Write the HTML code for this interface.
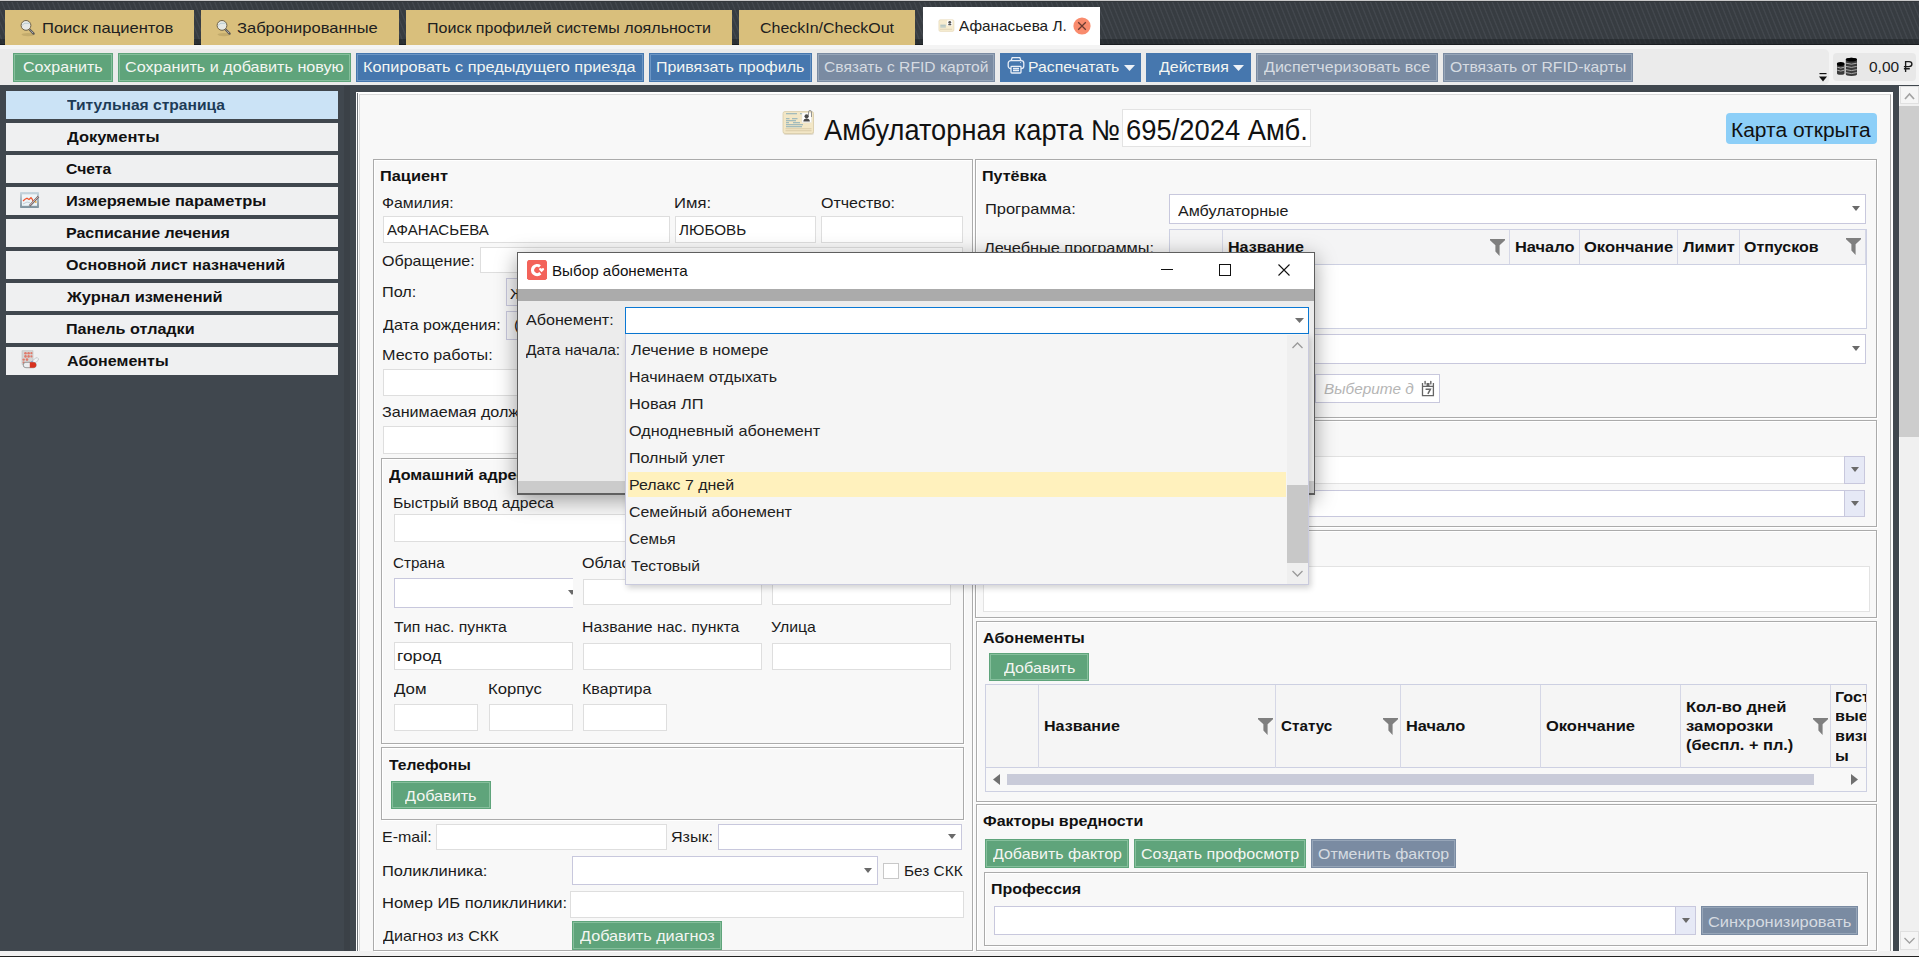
<!DOCTYPE html>
<html><head><meta charset="utf-8"><title>Амбулаторная карта</title>
<style>
html,body{margin:0;padding:0;}
body{width:1919px;height:957px;overflow:hidden;position:relative;background:#40474e;font-family:"Liberation Sans",sans-serif;}
.r{position:absolute;}
.t{position:absolute;white-space:nowrap;transform-origin:0 0;}
</style></head><body>
<div class="r" style="left:0px;top:0px;width:1919px;height:1px;background:#c9c9c9"></div>
<div class="r" style="left:0px;top:1px;width:1919px;height:44px;background:repeating-linear-gradient(68deg,#373c41 0px,#373c41 2.6px,#42474d 3.4px,#42474d 4px,#373c41 4.7px)"></div>
<div class="r" style="left:0px;top:1px;width:1919px;height:1px;background:#33373b"></div>
<div class="r" style="left:0px;top:39px;width:1919px;height:6px;background:#1f2327;opacity:0.55"></div>
<div class="r" style="left:0px;top:44px;width:1919px;height:1px;background:#1b1e21"></div>
<div class="r" style="left:5px;top:10px;width:189px;height:35px;background:#d9bf7c"></div>
<div class="t" style="left:41.90px;top:19px;font-size:15.0px;line-height:17px;color:#202020;transform:scaleX(1.1043);">Поиск пациентов</div>
<svg class="r" style="left:20px;top:18px" width="18" height="19" viewBox="0 0 18 19"><ellipse cx="8" cy="16.6" rx="6.5" ry="1.6" fill="#9c8650" opacity="0.35"/><line x1="9.3" y1="11.3" x2="13.6" y2="15.6" stroke="#5d5a55" stroke-width="2.3" stroke-linecap="round"/><line x1="9.6" y1="11.6" x2="13.4" y2="15.4" stroke="#d9d9e6" stroke-width="1" stroke-dasharray="0.9 0.9"/><circle cx="6.0" cy="7.4" r="4.9" fill="#e6e9e6" stroke="#6f6348" stroke-width="1"/><path d="M2.4 7.6 Q3 5.6 5 5.3 L9.8 5.3" stroke="#b4c8d0" stroke-width="0.9" fill="none"/></svg>
<div class="r" style="left:201px;top:10px;width:198px;height:35px;background:#d9bf7c"></div>
<div class="t" style="left:237.40px;top:19px;font-size:15.0px;line-height:17px;color:#202020;transform:scaleX(1.1008);">Забронированные</div>
<svg class="r" style="left:215.5px;top:18px" width="18" height="19" viewBox="0 0 18 19"><ellipse cx="8" cy="16.6" rx="6.5" ry="1.6" fill="#9c8650" opacity="0.35"/><line x1="9.3" y1="11.3" x2="13.6" y2="15.6" stroke="#5d5a55" stroke-width="2.3" stroke-linecap="round"/><line x1="9.6" y1="11.6" x2="13.4" y2="15.4" stroke="#d9d9e6" stroke-width="1" stroke-dasharray="0.9 0.9"/><circle cx="6.0" cy="7.4" r="4.9" fill="#e6e9e6" stroke="#6f6348" stroke-width="1"/><path d="M2.4 7.6 Q3 5.6 5 5.3 L9.8 5.3" stroke="#b4c8d0" stroke-width="0.9" fill="none"/></svg>
<div class="r" style="left:406px;top:10px;width:326px;height:35px;background:#d9bf7c"></div>
<div class="t" style="left:426.93px;top:19px;font-size:15.0px;line-height:17px;color:#202020;transform:scaleX(1.0682);">Поиск профилей системы лояльности</div>
<div class="r" style="left:739px;top:10px;width:176px;height:35px;background:#d9bf7c"></div>
<div class="t" style="left:759.94px;top:19px;font-size:15.0px;line-height:17px;color:#202020;transform:scaleX(1.0640);">CheckIn/CheckOut</div>
<div class="r" style="left:923px;top:7px;width:177px;height:38px;background:#ffffff"></div>
<div class="t" style="left:959.00px;top:18px;font-size:14.6px;line-height:16px;color:#202020;transform:scaleX(1.0495);">Афанасьева Л.</div>
<svg class="r" style="left:938px;top:19px" width="17" height="13" viewBox="0 0 17 14"><rect x="0.3" y="0.8" width="16.2" height="12.6" rx="1.6" fill="#f6ecd0" stroke="#e3d6b4" stroke-width="0.6"/><rect x="1.8" y="6.2" width="6" height="0.9" fill="#8fb1bd"/><rect x="1.8" y="8.1" width="6" height="0.9" fill="#8fb1bd"/><rect x="1.5" y="10.5" width="13" height="1" fill="#ddd2b6"/><rect x="9.2" y="1.5" width="5.6" height="5.6" fill="#fff"/><circle cx="12" cy="3.6" r="1.5" fill="#555"/><rect x="10.3" y="5" width="3.4" height="1.6" rx="0.6" fill="#555"/></svg>
<svg class="r" style="left:1073px;top:17px" width="18" height="18" viewBox="0 0 18 18"><circle cx="9" cy="9" r="8.6" fill="#f98b6d"/><path d="M5.2 5.2 L12.8 12.8 M12.8 5.2 L5.2 12.8" stroke="#6b3a30" stroke-width="1.3"/></svg>
<div class="r" style="left:0px;top:45px;width:1919px;height:40px;background:#f4f4f4"></div>
<div class="r" style="left:0px;top:49px;width:1829px;height:36px;background:#ebebeb;border-radius:0 5px 5px 0"></div>
<div class="r" style="left:1833px;top:53px;width:83px;height:28px;background:#e8e8e8;border-radius:4px"></div>
<div class="r" style="left:13px;top:53px;width:100px;height:29px;background:#5fa47b;box-shadow:inset 0 0 0 1px #5fa47b, inset 0 0 0 2px #86bf9c;"></div>
<div class="t" style="left:22.93px;top:58px;font-size:15.0px;line-height:17px;color:#f4f6f2;transform:scaleX(1.0685);">Сохранить</div>
<div class="r" style="left:118px;top:53px;width:233px;height:29px;background:#5fa47b;box-shadow:inset 0 0 0 1px #5fa47b, inset 0 0 0 2px #86bf9c;"></div>
<div class="t" style="left:124.67px;top:58px;font-size:15.0px;line-height:17px;color:#f4f6f2;transform:scaleX(1.0767);">Сохранить и добавить новую</div>
<div class="r" style="left:356px;top:53px;width:288px;height:29px;background:#4677ae;box-shadow:inset 0 0 0 1px #4677ae, inset 0 0 0 2px #6d96c4;"></div>
<div class="t" style="left:362.92px;top:58px;font-size:15.0px;line-height:17px;color:#f4f6f2;transform:scaleX(1.0837);">Копировать с предыдущего приезда</div>
<div class="r" style="left:649px;top:53px;width:163px;height:29px;background:#4677ae;box-shadow:inset 0 0 0 1px #4677ae, inset 0 0 0 2px #6d96c4;"></div>
<div class="t" style="left:655.93px;top:58px;font-size:15.0px;line-height:17px;color:#f4f6f2;transform:scaleX(1.0652);">Привязать профиль</div>
<div class="r" style="left:817px;top:53px;width:178px;height:29px;background:#7a8ba2;box-shadow:inset 0 0 0 1px #7a8ba2, inset 0 0 0 2px #96a5b8;"></div>
<div class="t" style="left:823.76px;top:58px;font-size:15.0px;line-height:17px;color:#d6dbe1;transform:scaleX(1.0410);">Связать с RFID картой</div>
<div class="r" style="left:1000px;top:53px;width:141px;height:29px;background:#4677ae;"></div>
<div class="t" style="left:1027.95px;top:58px;font-size:15.0px;line-height:17px;color:#f4f6f2;transform:scaleX(1.0529);">Распечатать</div>
<div class="r" style="left:1146px;top:53px;width:105px;height:29px;background:#4677ae;"></div>
<div class="t" style="left:1159.00px;top:58px;font-size:15.0px;line-height:17px;color:#f4f6f2;transform:scaleX(1.0615);">Действия</div>
<div class="r" style="left:1256px;top:53px;width:182px;height:29px;background:#7a8ba2;box-shadow:inset 0 0 0 1px #7a8ba2, inset 0 0 0 2px #96a5b8;"></div>
<div class="t" style="left:1264.00px;top:58px;font-size:15.0px;line-height:17px;color:#d6dbe1;transform:scaleX(1.0710);">Диспетчеризовать все</div>
<div class="r" style="left:1443px;top:53px;width:190px;height:29px;background:#7a8ba2;box-shadow:inset 0 0 0 1px #7a8ba2, inset 0 0 0 2px #96a5b8;"></div>
<div class="t" style="left:1449.95px;top:58px;font-size:15.0px;line-height:17px;color:#d6dbe1;transform:scaleX(1.0482);">Отвязать от RFID-карты</div>
<svg class="r" style="left:1007px;top:56px" width="18" height="18" viewBox="0 0 18 18" fill="none" stroke="#e8eef6" stroke-width="1.3"><path d="M4.2 4.3 L5.2 1.6 H12.8 L13.8 4.3"/><rect x="1.2" y="4.6" width="15.6" height="8" rx="2.6"/><rect x="4" y="10.4" width="10" height="6.6" rx="0.8" fill="#4677ae"/><path d="M6 12.5 H12 M6 14.5 H12"/><circle cx="13.6" cy="6.6" r="0.5" fill="#e8eef6" stroke="none"/></svg>
<svg class="r" style="left:1124px;top:65px" width="11" height="6"><path d="M0 0 H11 L5.5 6 Z" fill="#eef2f7"/></svg>
<svg class="r" style="left:1233px;top:65px" width="11" height="6"><path d="M0 0 H11 L5.5 6 Z" fill="#eef2f7"/></svg>
<svg class="r" style="left:1819px;top:73px" width="8" height="9"><rect x="0.5" y="0" width="7" height="1.2" fill="#111"/><path d="M0 3.5 H8 L4 8.5 Z" fill="#111"/></svg>
<svg class="r" style="left:1836px;top:57px" width="22" height="20" viewBox="0 0 22 20"><g fill="#3a3a3a"><path d="M1 7 Q1 5.4 4.7 5.4 Q8.5 5.4 8.5 7 V16.3 Q8.5 17.8 4.7 17.8 Q1 17.8 1 16.3 Z"/><path d="M9.8 2.4 Q9.8 0.8 15.4 0.8 Q21 0.8 21 2.4 V17.2 Q21 18.9 15.4 18.9 Q9.8 18.9 9.8 17.2 Z"/></g><g fill="#000"><ellipse cx="4.7" cy="7" rx="3.8" ry="1.9"/><ellipse cx="15.4" cy="2.6" rx="5.6" ry="1.9"/></g><g stroke="#b5b5b5" stroke-width="0.9" fill="none"><path d="M1.2 10.2 Q4.7 12 8.3 10.2 M1.2 13.2 Q4.7 15 8.3 13.2 M10 6.2 Q15.4 8.2 20.8 6.2 M10 9.4 Q15.4 11.4 20.8 9.4 M10 12.6 Q15.4 14.6 20.8 12.6 M10 15.6 Q15.4 17.6 20.8 15.6"/></g></svg>
<div class="t" style="left:1868.87px;top:58px;font-size:15.0px;line-height:17px;color:#1b1b1b;transform:scaleX(1.0321);">0,00</div>
<svg class="r" style="left:1900px;top:58px" width="16" height="16" viewBox="1900 58 16 16"><path d="M1905.6 72 V61.6 H1909 Q1911.9 61.6 1911.9 64.1 Q1911.9 66.6 1909 66.6 H1903.9 M1903.9 68.7 H1909.8" stroke="#1b1b1b" stroke-width="1.35" fill="none"/></svg>
<div class="r" style="left:6px;top:91px;width:332px;height:28px;background:#cbe3f6"></div>
<div class="t" style="left:66.80px;top:96px;font-size:15.0px;line-height:17px;font-weight:700;color:#1d3b57;transform:scaleX(1.0395);">Титульная страница</div>
<div class="r" style="left:6px;top:123px;width:332px;height:28px;background:#eff0f1"></div>
<div class="t" style="left:66.80px;top:128px;font-size:15.0px;line-height:17px;font-weight:700;color:#111;transform:scaleX(1.0964);">Документы</div>
<div class="r" style="left:6px;top:155px;width:332px;height:28px;background:#eff0f1"></div>
<div class="t" style="left:65.75px;top:160px;font-size:15.0px;line-height:17px;font-weight:700;color:#111;transform:scaleX(1.0476);">Счета</div>
<div class="r" style="left:6px;top:187px;width:332px;height:28px;background:#eff0f1"></div>
<div class="t" style="left:65.71px;top:192px;font-size:15.0px;line-height:17px;font-weight:700;color:#111;transform:scaleX(1.0939);">Измеряемые параметры</div>
<div class="r" style="left:6px;top:219px;width:332px;height:28px;background:#eff0f1"></div>
<div class="t" style="left:65.73px;top:224px;font-size:15.0px;line-height:17px;font-weight:700;color:#111;transform:scaleX(1.0658);">Расписание лечения</div>
<div class="r" style="left:6px;top:251px;width:332px;height:28px;background:#eff0f1"></div>
<div class="t" style="left:65.73px;top:256px;font-size:15.0px;line-height:17px;font-weight:700;color:#111;transform:scaleX(1.0723);">Основной лист назначений</div>
<div class="r" style="left:6px;top:283px;width:332px;height:28px;background:#eff0f1"></div>
<div class="t" style="left:66.80px;top:288px;font-size:15.0px;line-height:17px;font-weight:700;color:#111;transform:scaleX(1.0915);">Журнал изменений</div>
<div class="r" style="left:6px;top:315px;width:332px;height:28px;background:#eff0f1"></div>
<div class="t" style="left:65.72px;top:320px;font-size:15.0px;line-height:17px;font-weight:700;color:#111;transform:scaleX(1.0763);">Панель отладки</div>
<div class="r" style="left:6px;top:347px;width:332px;height:28px;background:#eff0f1"></div>
<div class="t" style="left:66.80px;top:352px;font-size:15.0px;line-height:17px;font-weight:700;color:#111;transform:scaleX(1.0702);">Абонементы</div>
<svg class="r" style="left:20px;top:192px" width="20" height="17" viewBox="0 0 20 17"><defs><linearGradient id="gfr" x1="0" y1="0" x2="0" y2="1"><stop offset="0" stop-color="#c9d7df"/><stop offset="1" stop-color="#7f939e"/></linearGradient></defs><rect x="0" y="0" width="19" height="16" rx="0.8" fill="url(#gfr)"/><rect x="2" y="2.3" width="15" height="11.5" fill="#eef5f8"/><path d="M3 9 L5 7.3 L7 6.3 L9 7.5 L11 5.7 L12.5 7.6 L13 9.5" stroke="#f0552f" stroke-width="1.2" fill="none"/><path d="M3 12 L7 10 L10 10.8" stroke="#b8c4cc" stroke-width="0.8" fill="none"/><path d="M9.5 14 L18.5 4.5" stroke="#6d6d6d" stroke-width="2.2"/><path d="M9.6 13.6 L18.3 4.6" stroke="#e4b2b2" stroke-width="0.9"/><circle cx="15.8" cy="10" r="0.9" fill="#e8a840"/></svg>
<svg class="r" style="left:21px;top:350px" width="18" height="19" viewBox="0 0 18 19"><rect x="1" y="0.8" width="11" height="13.5" fill="#d6d6d6" stroke="#b5b5b5" stroke-width="0.5"/><g fill="#e07a6a"><circle cx="4.5" cy="3.2" r="1.3"/><circle cx="7.6" cy="3.2" r="1.3"/><circle cx="10.4" cy="3.2" r="1.1"/><circle cx="4.5" cy="6.4" r="1.3"/><circle cx="7.6" cy="6.4" r="1.3"/><circle cx="10.4" cy="6.4" r="1.1"/><circle cx="2.7" cy="9.6" r="1.2"/><circle cx="6" cy="9.6" r="1.3"/><circle cx="2.7" cy="12.6" r="1.1"/></g><path d="M8.8 13.2 L14.5 8.2 Q16.6 6.8 17.4 8.8 Q17.8 10.3 16 11.4 L11.6 14.5 Z" fill="#f2f4f6" stroke="#9aa0a6" stroke-width="0.5"/><path d="M8.8 13.2 L11.2 11.1 L12.5 12.7 L11.6 14.5 Z" fill="#5d7fd0"/><rect x="2.2" y="12.3" width="13" height="5.4" rx="2.7" fill="#eceff1" stroke="#777" stroke-width="0.7"/><path d="M8.8 12.3 H12.5 Q15.2 12.3 15.2 15 Q15.2 17.7 12.5 17.7 H8.8 Z" fill="#d8321f"/></svg>
<div class="r" style="left:344px;top:86px;width:6px;height:865px;background:#3b4147"></div>
<div class="r" style="left:356px;top:92px;width:1537px;height:859px;background:#ffffff"></div>
<div class="r" style="left:357px;top:93px;width:1px;height:858px;background:#6e7379"></div>
<div class="r" style="left:359px;top:94px;width:1532px;height:857px;background:#f8f8f8;border-left:1px solid #d9d9d9;border-top:1px solid #d9d9d9;border-right:1px solid #a9a9a9;box-sizing:border-box"></div>
<div class="r" style="left:0px;top:951px;width:1919px;height:5px;background:#f1f1f1"></div>
<div class="r" style="left:0px;top:956px;width:1919px;height:1px;background:#222"></div>
<div class="r" style="left:1899px;top:86px;width:20px;height:865px;background:#f0f0f0;border-left:1px solid #fafafa;box-sizing:border-box"></div>
<div class="r" style="left:1900px;top:86px;width:19px;height:18px;background:#f5f5f5;border:1px solid #e0e0e0;box-sizing:border-box"></div>
<svg class="r" style="left:1904px;top:92px" width="11" height="8"><path d="M1 7 L5.5 2 L10 7" stroke="#a3a3a3" stroke-width="1.7" fill="none"/></svg>
<div class="r" style="left:1899px;top:106px;width:20px;height:331px;background:#cdcdcd"></div>
<div class="r" style="left:1900px;top:931px;width:19px;height:19px;background:#f5f5f5;border:1px solid #e0e0e0;box-sizing:border-box"></div>
<svg class="r" style="left:1904px;top:937px" width="11" height="7"><path d="M0.5 1 L5.5 6 L10.5 1" stroke="#a0a0a0" stroke-width="1.3" fill="none"/></svg>
<svg class="r" style="left:782px;top:110px" width="34" height="27" viewBox="0 0 34 27"><rect x="1.5" y="3" width="30.5" height="22" rx="2.2" fill="#cfc6b0" opacity="0.55"/><rect x="1" y="1.5" width="30.5" height="22" rx="2" fill="#f3e7c6" stroke="#d8cba8" stroke-width="0.8"/><g fill="#7fa8b8"><rect x="4" y="3.3" width="11" height="0.9"/><rect x="18" y="3.3" width="2" height="0.9"/><rect x="4" y="8.3" width="3.5" height="0.9"/><rect x="10" y="8.3" width="5.5" height="0.9"/><rect x="4" y="10.3" width="6" height="0.9"/><rect x="10" y="10.3" width="4" height="0.9"/><rect x="4" y="12.3" width="3" height="0.9"/><rect x="11" y="12.3" width="7" height="0.9"/><rect x="4" y="14.3" width="6" height="0.9"/><rect x="10" y="14.3" width="11" height="0.9"/><rect x="4" y="16.3" width="6" height="0.9"/><rect x="10" y="16.3" width="10" height="0.9"/></g><rect x="3.5" y="18.3" width="26" height="0.9" fill="#d7c9a5"/><rect x="3.5" y="20.3" width="26" height="0.9" fill="#d7c9a5"/><rect x="20" y="3" width="9.5" height="9.5" fill="#ffffff" stroke="#ddd" stroke-width="0.4"/><circle cx="24.6" cy="6.3" r="2.1" fill="#4a4a4a"/><path d="M21.3 11.5 Q21.5 8.4 24.6 8.4 Q27.7 8.4 27.9 11.5 Z" fill="#4a4a4a"/><path d="M26.5 6 V1.8 Q26.5 0.5 28 0.5 Q29.5 0.5 29.5 1.8 V7" stroke="#8c8c8c" stroke-width="0.9" fill="none"/></svg>
<div class="t" style="left:824.00px;top:114px;font-size:28.6px;line-height:32px;color:#111;transform:scaleX(0.9516);">Амбулаторная карта №</div>
<div class="r" style="left:1122px;top:109px;width:189px;height:38px;background:#fff;border:1px solid #e3e3e3;box-sizing:border-box"></div>
<div class="t" style="left:1126.04px;top:114px;font-size:28.6px;line-height:32px;color:#111;transform:scaleX(0.9572);">695/2024 Амб.</div>
<div class="r" style="left:1726px;top:113px;width:151px;height:31px;background:#8dcff8;border-radius:4px"></div>
<div class="t" style="left:1730.86px;top:119px;font-size:19.6px;line-height:22px;color:#111;transform:scaleX(1.0698);">Карта открыта</div>
<div class="r" style="left:373px;top:159px;width:600px;height:792px;border:1px solid #ababab;box-shadow:inset 1px 1px 0 #fff, 1px 1px 0 #fff;box-sizing:border-box"></div>
<div class="t" style="left:379.91px;top:167px;font-size:15.0px;line-height:17px;font-weight:700;color:#111;transform:scaleX(1.0902);">Пациент</div>
<div class="t" style="left:381.94px;top:194px;font-size:15.0px;line-height:17px;color:#1b1b1b;transform:scaleX(1.0561);">Фамилия:</div>
<div class="t" style="left:674.49px;top:194px;font-size:15.0px;line-height:17px;color:#1b1b1b;transform:scaleX(1.1097);">Имя:</div>
<div class="t" style="left:820.63px;top:194px;font-size:15.0px;line-height:17px;color:#1b1b1b;transform:scaleX(1.0672);">Отчество:</div>
<div class="r" style="left:383px;top:216px;width:287px;height:27px;background:#fff;border:1px solid #dedede;box-sizing:border-box"></div>
<div class="t" style="left:386.50px;top:221px;font-size:15.0px;line-height:17px;color:#1b1b1b;transform:scaleX(1.0050);">АФАНАСЬЕВА</div>
<div class="r" style="left:675px;top:216px;width:141px;height:27px;background:#fff;border:1px solid #dedede;box-sizing:border-box"></div>
<div class="t" style="left:679.40px;top:221px;font-size:15.0px;line-height:17px;color:#1b1b1b;transform:scaleX(1.0154);">ЛЮБОВЬ</div>
<div class="r" style="left:821px;top:216px;width:142px;height:27px;background:#fff;border:1px solid #dedede;box-sizing:border-box"></div>
<div class="t" style="left:381.93px;top:252px;font-size:15.0px;line-height:17px;color:#1b1b1b;transform:scaleX(1.0706);">Обращение:</div>
<div class="r" style="left:480px;top:247px;width:483px;height:26px;background:#fff;border:1px solid #dedede;box-sizing:border-box"></div>
<div class="t" style="left:381.92px;top:283px;font-size:15.0px;line-height:17px;color:#1b1b1b;transform:scaleX(1.0833);">Пол:</div>
<div class="r" style="left:506px;top:278px;width:457px;height:28px;background:#f4f4f6;border:1px solid #c8c8dd;box-sizing:border-box"></div>
<div class="t" style="left:510.00px;top:285px;font-size:15.0px;line-height:17px;color:#1b1b1b;transform:scaleX(1.0750);">Ж</div>
<div class="t" style="left:383.00px;top:316px;font-size:15.0px;line-height:17px;color:#1b1b1b;transform:scaleX(1.0706);">Дата рождения:</div>
<div class="r" style="left:506px;top:311px;width:457px;height:29px;background:#f4f4f6;border:1px solid #c8c8dd;box-sizing:border-box"></div>
<div class="t" style="left:513.62px;top:316px;font-size:15.0px;line-height:17px;color:#1b1b1b;transform:scaleX(1.0750);">(дд.мм.гггг)</div>
<div class="t" style="left:381.92px;top:346px;font-size:15.0px;line-height:17px;color:#1b1b1b;transform:scaleX(1.0762);">Место работы:</div>
<div class="r" style="left:383px;top:369px;width:580px;height:27px;background:#fff;border:1px solid #dedede;box-sizing:border-box"></div>
<div class="t" style="left:381.93px;top:403px;font-size:15.0px;line-height:17px;color:#1b1b1b;transform:scaleX(1.0750);">Занимаемая должность:</div>
<div class="r" style="left:383px;top:426px;width:580px;height:28px;background:#fff;border:1px solid #dedede;box-sizing:border-box"></div>
<div class="r" style="left:381px;top:458px;width:583px;height:286px;border:1px solid #ababab;box-shadow:inset 1px 1px 0 #fff, 1px 1px 0 #fff;box-sizing:border-box"></div>
<div class="t" style="left:389.00px;top:466px;font-size:15.0px;line-height:17px;font-weight:700;color:#111;transform:scaleX(1.0750);">Домашний адрес</div>
<div class="t" style="left:393.25px;top:494px;font-size:15.0px;line-height:17px;color:#1b1b1b;transform:scaleX(1.0513);">Быстрый ввод адреса</div>
<div class="r" style="left:394px;top:514px;width:557px;height:28px;background:#fff;border:1px solid #dedede;box-sizing:border-box"></div>
<div class="t" style="left:393.29px;top:554px;font-size:15.0px;line-height:17px;color:#1b1b1b;transform:scaleX(1.0120);">Страна</div>
<div class="r" style="left:394px;top:578px;width:179px;height:30px;overflow:hidden"><div class="r" style="left:0;top:0;width:200px;height:30px;background:#fff;border:1px solid #c8c8dd;box-sizing:border-box"></div><svg class="r" style="left:174px;top:12px" width="8" height="5"><path d="M0 0 H8 L4 5 Z" fill="#6a6a6a"/></svg></div>
<div class="t" style="left:582.42px;top:554px;font-size:15.0px;line-height:17px;color:#1b1b1b;transform:scaleX(1.0750);">Область</div>
<div class="r" style="left:583px;top:579px;width:179px;height:26px;background:#fff;border:1px solid #dedede;box-sizing:border-box"></div>
<div class="t" style="left:771.22px;top:554px;font-size:15.0px;line-height:17px;color:#1b1b1b;transform:scaleX(1.0750);">Район</div>
<div class="r" style="left:772px;top:579px;width:179px;height:26px;background:#fff;border:1px solid #dedede;box-sizing:border-box"></div>
<div class="t" style="left:394.00px;top:618px;font-size:15.0px;line-height:17px;color:#1b1b1b;transform:scaleX(1.0509);">Тип нас. пункта</div>
<div class="r" style="left:394px;top:642px;width:179px;height:28px;background:#fff;border:1px solid #dedede;box-sizing:border-box"></div>
<div class="t" style="left:396.85px;top:647px;font-size:15.0px;line-height:17px;color:#1b1b1b;transform:scaleX(1.1514);">город</div>
<div class="t" style="left:582.35px;top:618px;font-size:15.0px;line-height:17px;color:#1b1b1b;transform:scaleX(1.0537);">Название нас. пункта</div>
<div class="r" style="left:583px;top:643px;width:179px;height:27px;background:#fff;border:1px solid #dedede;box-sizing:border-box"></div>
<div class="t" style="left:771.25px;top:618px;font-size:15.0px;line-height:17px;color:#1b1b1b;transform:scaleX(1.0524);">Улица</div>
<div class="r" style="left:772px;top:643px;width:179px;height:27px;background:#fff;border:1px solid #dedede;box-sizing:border-box"></div>
<div class="t" style="left:394.00px;top:680px;font-size:15.0px;line-height:17px;color:#1b1b1b;transform:scaleX(1.1250);">Дом</div>
<div class="r" style="left:394px;top:704px;width:84px;height:27px;background:#fff;border:1px solid #dedede;box-sizing:border-box"></div>
<div class="t" style="left:487.79px;top:680px;font-size:15.0px;line-height:17px;color:#1b1b1b;transform:scaleX(1.1128);">Корпус</div>
<div class="r" style="left:489px;top:704px;width:84px;height:27px;background:#fff;border:1px solid #dedede;box-sizing:border-box"></div>
<div class="t" style="left:582.33px;top:680px;font-size:15.0px;line-height:17px;color:#1b1b1b;transform:scaleX(1.0703);">Квартира</div>
<div class="r" style="left:583px;top:704px;width:84px;height:27px;background:#fff;border:1px solid #dedede;box-sizing:border-box"></div>
<div class="r" style="left:381px;top:747px;width:583px;height:73px;border:1px solid #ababab;box-shadow:inset 1px 1px 0 #fff, 1px 1px 0 #fff;box-sizing:border-box"></div>
<div class="t" style="left:389.00px;top:756px;font-size:15.0px;line-height:17px;font-weight:700;color:#111;transform:scaleX(1.0429);">Телефоны</div>
<div class="r" style="left:391px;top:781px;width:100px;height:28px;background:#5fa47b;box-shadow:inset 0 0 0 1px #5fa47b, inset 0 0 0 2px #86bf9c;"></div>
<div class="t" style="left:405.40px;top:787px;font-size:15.0px;line-height:17px;color:#f4f6f2;transform:scaleX(1.0788);">Добавить</div>
<div class="t" style="left:381.83px;top:828px;font-size:15.0px;line-height:17px;color:#1b1b1b;transform:scaleX(1.0667);">E-mail:</div>
<div class="r" style="left:436px;top:824px;width:231px;height:26px;background:#fff;border:1px solid #dedede;box-sizing:border-box"></div>
<div class="t" style="left:670.93px;top:828px;font-size:15.0px;line-height:17px;color:#1b1b1b;transform:scaleX(1.0730);">Язык:</div>
<div class="r" style="left:718px;top:824px;width:244px;height:26px;background:#fff;border:1px solid #c8c8dd;box-sizing:border-box"></div>
<svg class="r" style="left:948px;top:834.0px" width="8" height="5"><path d="M0 0 H8 L4.0 5 Z" fill="#6a6a6a"/></svg>
<div class="t" style="left:381.80px;top:862px;font-size:15.0px;line-height:17px;color:#1b1b1b;transform:scaleX(1.1000);">Поликлиника:</div>
<div class="r" style="left:572px;top:856px;width:306px;height:29px;background:#fff;border:1px solid #c8c8dd;box-sizing:border-box"></div>
<svg class="r" style="left:864px;top:868.0px" width="8" height="5"><path d="M0 0 H8 L4.0 5 Z" fill="#6a6a6a"/></svg>
<div class="r" style="left:883px;top:863px;width:16px;height:16px;background:#fff;border:1px solid #c8c8c8;box-sizing:border-box"></div>
<div class="t" style="left:903.58px;top:862px;font-size:15.0px;line-height:17px;color:#1b1b1b;transform:scaleX(1.0250);">Без СКК</div>
<div class="t" style="left:381.80px;top:894px;font-size:15.0px;line-height:17px;color:#1b1b1b;transform:scaleX(1.1012);">Номер ИБ поликлиники:</div>
<div class="r" style="left:570px;top:891px;width:394px;height:27px;background:#fff;border:1px solid #dedede;box-sizing:border-box"></div>
<div class="t" style="left:382.90px;top:927px;font-size:15.0px;line-height:17px;color:#1b1b1b;transform:scaleX(1.0748);">Диагноз из СКК</div>
<div class="r" style="left:572px;top:921px;width:150px;height:29px;background:#5fa47b;box-shadow:inset 0 0 0 1px #5fa47b, inset 0 0 0 2px #86bf9c;"></div>
<div class="t" style="left:580.00px;top:927px;font-size:15.0px;line-height:17px;color:#f4f6f2;transform:scaleX(1.0806);">Добавить диагноз</div>
<div class="r" style="left:975px;top:159px;width:902px;height:259px;border:1px solid #ababab;box-shadow:inset 1px 1px 0 #fff, 1px 1px 0 #fff;box-sizing:border-box"></div>
<div class="t" style="left:982.23px;top:167px;font-size:15.0px;line-height:17px;font-weight:700;color:#111;transform:scaleX(1.0729);">Путёвка</div>
<div class="t" style="left:984.50px;top:200px;font-size:15.0px;line-height:17px;color:#1b1b1b;transform:scaleX(1.0963);">Программа:</div>
<div class="r" style="left:1169px;top:194px;width:697px;height:30px;background:#fff;border:1px solid #c8c8dd;box-sizing:border-box"></div>
<svg class="r" style="left:1852px;top:206.0px" width="8" height="5"><path d="M0 0 H8 L4.0 5 Z" fill="#6a6a6a"/></svg>
<div class="t" style="left:1178.30px;top:202px;font-size:15.0px;line-height:17px;color:#1b1b1b;transform:scaleX(1.0718);">Амбулаторные</div>
<div class="t" style="left:984.00px;top:239px;font-size:15.0px;line-height:17px;color:#1b1b1b;transform:scaleX(1.0877);">Лечебные программы:</div>
<div class="r" style="left:1169px;top:229px;width:698px;height:100px;background:#fff;border:1px solid #cdd0e2;box-sizing:border-box"></div>
<div class="r" style="left:1170px;top:230px;width:696px;height:35px;background:#f4f4f5;border-bottom:1px solid #cdd0e2;box-sizing:border-box"></div>
<div class="r" style="left:1222px;top:230px;width:1px;height:34px;background:#d5d7e6"></div>
<div class="r" style="left:1509px;top:230px;width:1px;height:34px;background:#d5d7e6"></div>
<div class="r" style="left:1579px;top:230px;width:1px;height:34px;background:#d5d7e6"></div>
<div class="r" style="left:1677px;top:230px;width:1px;height:34px;background:#d5d7e6"></div>
<div class="r" style="left:1739px;top:230px;width:1px;height:34px;background:#d5d7e6"></div>
<div class="r" style="left:1865px;top:230px;width:1px;height:34px;background:#d5d7e6"></div>
<div class="t" style="left:1227.68px;top:238px;font-size:15.0px;line-height:17px;font-weight:700;color:#111;transform:scaleX(1.0714);">Название</div>
<svg class="r" style="left:1490px;top:239px" width="15" height="17" viewBox="0 0 15 17"><path d="M0 0 H15 V1.3 L9.6 6.2 V17 L5.4 12.6 V6.2 L0 1.3 Z" fill="#7f7f7f"/></svg>
<div class="t" style="left:1514.91px;top:238px;font-size:15.0px;line-height:17px;font-weight:700;color:#111;transform:scaleX(1.0943);">Начало</div>
<div class="t" style="left:1583.50px;top:238px;font-size:15.0px;line-height:17px;font-weight:700;color:#111;transform:scaleX(1.1025);">Окончание</div>
<div class="t" style="left:1683.40px;top:238px;font-size:15.0px;line-height:17px;font-weight:700;color:#111;transform:scaleX(1.0915);">Лимит</div>
<div class="t" style="left:1744.44px;top:238px;font-size:15.0px;line-height:17px;font-weight:700;color:#111;transform:scaleX(1.0638);">Отпусков</div>
<svg class="r" style="left:1846px;top:238px" width="15" height="17" viewBox="0 0 15 17"><path d="M0 0 H15 V1.3 L9.6 6.2 V17 L5.4 12.6 V6.2 L0 1.3 Z" fill="#7f7f7f"/></svg>
<div class="r" style="left:1169px;top:334px;width:697px;height:30px;background:#fff;border:1px solid #c8c8dd;box-sizing:border-box"></div>
<svg class="r" style="left:1852px;top:346.0px" width="8" height="5"><path d="M0 0 H8 L4.0 5 Z" fill="#6a6a6a"/></svg>
<div class="r" style="left:1315px;top:374px;width:125px;height:29px;background:#fff;border:1px solid #c8c8dd;box-sizing:border-box"></div>
<div class="t" style="left:1324.00px;top:380px;font-size:15.0px;line-height:17px;color:#b5b5b5;font-style:italic;transform:scaleX(1.0227);">Выберите д</div>
<svg class="r" style="left:1421px;top:380px" width="14" height="17" viewBox="0 0 14 17"><g fill="none" stroke="#666" stroke-width="1.3"><path d="M1.5 3 V15.6 H12.4 V3 M1.5 6.3 H12.4"/></g><g fill="#666"><rect x="5.5" y="3" width="3" height="3.3"/><rect x="3.4" y="0.8" width="1.4" height="3.8" rx="0.7"/><rect x="9.1" y="0.8" width="1.4" height="3.8" rx="0.7"/></g><path d="M4.6 9.2 H9.4 L6.9 13.9" stroke="#666" stroke-width="1.5" fill="none"/></svg>
<div class="r" style="left:975px;top:420px;width:902px;height:107px;border:1px solid #ababab;box-shadow:inset 1px 1px 0 #fff, 1px 1px 0 #fff;box-sizing:border-box"></div>
<div class="t" style="left:981.92px;top:429px;font-size:15.0px;line-height:17px;font-weight:700;color:#111;transform:scaleX(1.0750);">Медицинские данные</div>
<div class="r" style="left:1169px;top:456px;width:696px;height:28px;background:#fff;border:1px solid #e2e2e2;box-sizing:border-box"></div>
<div class="r" style="left:1844px;top:456px;width:21px;height:28px;background:#e6e9f6;border:1px solid #c8c8dd;box-sizing:border-box"></div>
<svg class="r" style="left:1851px;top:467.0px" width="8" height="5"><path d="M0 0 H8 L4.0 5 Z" fill="#6a6a6a"/></svg>
<div class="r" style="left:1169px;top:490px;width:696px;height:27px;background:#fff;border:1px solid #c8c8dd;box-sizing:border-box"></div>
<div class="r" style="left:1844px;top:490px;width:21px;height:27px;background:#e6e9f6;border:1px solid #c8c8dd;box-sizing:border-box"></div>
<svg class="r" style="left:1851px;top:501.0px" width="8" height="5"><path d="M0 0 H8 L4.0 5 Z" fill="#6a6a6a"/></svg>
<div class="r" style="left:975px;top:530px;width:902px;height:88px;border:1px solid #ababab;box-shadow:inset 1px 1px 0 #fff, 1px 1px 0 #fff;box-sizing:border-box"></div>
<div class="t" style="left:981.92px;top:539px;font-size:15.0px;line-height:17px;font-weight:700;color:#111;transform:scaleX(1.0750);">Примечание</div>
<div class="r" style="left:983px;top:566px;width:887px;height:46px;background:#fff;border:1px solid #e3e3e3;box-sizing:border-box"></div>
<div class="r" style="left:976px;top:621px;width:901px;height:181px;border:1px solid #ababab;box-shadow:inset 1px 1px 0 #fff, 1px 1px 0 #fff;box-sizing:border-box"></div>
<div class="t" style="left:983.10px;top:629px;font-size:15.0px;line-height:17px;font-weight:700;color:#111;transform:scaleX(1.0723);">Абонементы</div>
<div class="r" style="left:989px;top:653px;width:100px;height:28px;background:#5fa47b;box-shadow:inset 0 0 0 1px #5fa47b, inset 0 0 0 2px #86bf9c;"></div>
<div class="t" style="left:1003.50px;top:659px;font-size:15.0px;line-height:17px;color:#f4f6f2;transform:scaleX(1.0758);">Добавить</div>
<div class="r" style="left:985px;top:684px;width:882px;height:108px;background:#f8f8f8;border:1px solid #cdd0e2;box-sizing:border-box"></div>
<div class="r" style="left:986px;top:685px;width:880px;height:83px;background:#f5f5f5;border-bottom:1px solid #cdd0e2;box-sizing:border-box"></div>
<div class="r" style="left:1038px;top:685px;width:1px;height:83px;background:#d5d7e6"></div>
<div class="r" style="left:1275px;top:685px;width:1px;height:83px;background:#d5d7e6"></div>
<div class="r" style="left:1400px;top:685px;width:1px;height:83px;background:#d5d7e6"></div>
<div class="r" style="left:1540px;top:685px;width:1px;height:83px;background:#d5d7e6"></div>
<div class="r" style="left:1680px;top:685px;width:1px;height:83px;background:#d5d7e6"></div>
<div class="r" style="left:1830px;top:685px;width:1px;height:83px;background:#d5d7e6"></div>
<div class="t" style="left:1043.53px;top:717px;font-size:15.0px;line-height:17px;font-weight:700;color:#111;transform:scaleX(1.0714);">Название</div>
<svg class="r" style="left:1258px;top:718px" width="15" height="17" viewBox="0 0 15 17"><path d="M0 0 H15 V1.3 L9.6 6.2 V17 L5.4 12.6 V6.2 L0 1.3 Z" fill="#7f7f7f"/></svg>
<div class="t" style="left:1280.69px;top:717px;font-size:15.0px;line-height:17px;font-weight:700;color:#111;transform:scaleX(1.0143);">Статус</div>
<svg class="r" style="left:1383px;top:718px" width="15" height="17" viewBox="0 0 15 17"><path d="M0 0 H15 V1.3 L9.6 6.2 V17 L5.4 12.6 V6.2 L0 1.3 Z" fill="#7f7f7f"/></svg>
<div class="t" style="left:1405.91px;top:717px;font-size:15.0px;line-height:17px;font-weight:700;color:#111;transform:scaleX(1.0906);">Начало</div>
<div class="t" style="left:1545.90px;top:717px;font-size:15.0px;line-height:17px;font-weight:700;color:#111;transform:scaleX(1.1000);">Окончание</div>
<div class="t" style="left:1685.80px;top:698px;font-size:15.0px;line-height:17px;font-weight:700;color:#111;transform:scaleX(1.1034);">Кол-во дней</div>
<div class="t" style="left:1685.78px;top:717px;font-size:15.0px;line-height:17px;font-weight:700;color:#111;transform:scaleX(1.1184);">заморозки</div>
<div class="t" style="left:1685.81px;top:736px;font-size:15.0px;line-height:17px;font-weight:700;color:#111;transform:scaleX(1.0907);">(беспл. + пл.)</div>
<svg class="r" style="left:1813px;top:718px" width="15" height="17" viewBox="0 0 15 17"><path d="M0 0 H15 V1.3 L9.6 6.2 V17 L5.4 12.6 V6.2 L0 1.3 Z" fill="#7f7f7f"/></svg>
<div class="r" style="left:1836px;top:685px;width:30px;height:83px;overflow:hidden">
<div class="t" style="left:-0.57px;top:3px;font-size:15.0px;line-height:17px;font-weight:700;color:#111;transform:scaleX(1.0750);">Гостевые</div>
<div class="t" style="left:-0.57px;top:22px;font-size:15.0px;line-height:17px;font-weight:700;color:#111;transform:scaleX(1.0750);">выезды</div>
<div class="t" style="left:-0.57px;top:42px;font-size:15.0px;line-height:17px;font-weight:700;color:#111;transform:scaleX(1.0750);">визиты</div>
<div class="t" style="left:-0.57px;top:62px;font-size:15.0px;line-height:17px;font-weight:700;color:#111;transform:scaleX(1.0750);">ы</div>
</div>
<svg class="r" style="left:993px;top:774px" width="7" height="11"><path d="M7 0 V11 L0 5.5 Z" fill="#707070"/></svg>
<div class="r" style="left:1007px;top:774px;width:807px;height:11px;background:#c9cbd9"></div>
<svg class="r" style="left:1851px;top:774px" width="7" height="11"><path d="M0 0 V11 L7 5.5 Z" fill="#707070"/></svg>
<div class="r" style="left:976px;top:804px;width:901px;height:147px;border:1px solid #ababab;box-shadow:inset 1px 1px 0 #fff, 1px 1px 0 #fff;box-sizing:border-box"></div>
<div class="t" style="left:983.30px;top:812px;font-size:15.0px;line-height:17px;font-weight:700;color:#111;transform:scaleX(1.0664);">Факторы вредности</div>
<div class="r" style="left:985px;top:839px;width:144px;height:29px;background:#5fa47b;box-shadow:inset 0 0 0 1px #5fa47b, inset 0 0 0 2px #86bf9c;"></div>
<div class="t" style="left:992.65px;top:845px;font-size:15.0px;line-height:17px;color:#f4f6f2;transform:scaleX(1.0636);">Добавить фактор</div>
<div class="r" style="left:1134px;top:839px;width:172px;height:29px;background:#5fa47b;box-shadow:inset 0 0 0 1px #5fa47b, inset 0 0 0 2px #86bf9c;"></div>
<div class="t" style="left:1140.78px;top:845px;font-size:15.0px;line-height:17px;color:#f4f6f2;transform:scaleX(1.0705);">Создать профосмотр</div>
<div class="r" style="left:1311px;top:839px;width:145px;height:29px;background:#7a8ba2;box-shadow:inset 0 0 0 1px #7a8ba2, inset 0 0 0 2px #96a5b8;"></div>
<div class="t" style="left:1317.69px;top:845px;font-size:15.0px;line-height:17px;color:#d6dbe1;transform:scaleX(1.0615);">Отменить фактор</div>
<div class="r" style="left:984px;top:872px;width:884px;height:74px;border:1px solid #ababab;box-shadow:inset 1px 1px 0 #fff, 1px 1px 0 #fff;box-sizing:border-box"></div>
<div class="t" style="left:990.74px;top:880px;font-size:15.0px;line-height:17px;font-weight:700;color:#111;transform:scaleX(1.0627);">Профессия</div>
<div class="r" style="left:994px;top:906px;width:702px;height:29px;background:#fff;border:1px solid #c8c8dd;box-sizing:border-box"></div>
<div class="r" style="left:1675px;top:906px;width:21px;height:29px;background:#e6e9f6;border:1px solid #c8c8dd;box-sizing:border-box"></div>
<svg class="r" style="left:1682px;top:918.0px" width="8" height="5"><path d="M0 0 H8 L4.0 5 Z" fill="#6a6a6a"/></svg>
<div class="r" style="left:1701px;top:906px;width:157px;height:29px;background:#7a8ba2;box-shadow:inset 0 0 0 1px #7a8ba2, inset 0 0 0 2px #96a5b8;"></div>
<div class="t" style="left:1707.75px;top:913px;font-size:15.0px;line-height:17px;color:#d6dbe1;transform:scaleX(1.0953);">Синхронизировать</div>
<div class="r" style="left:517px;top:252px;width:798px;height:243px;box-shadow:0 5px 20px rgba(0,0,0,0.38)"></div>
<div class="r" style="left:517px;top:252px;width:798px;height:243px;background:#ececec;border:1px solid #5e5e5e;border-bottom:2px solid #606060;box-sizing:border-box"></div>
<div class="r" style="left:518px;top:253px;width:796px;height:36px;background:#ffffff"></div>
<div class="r" style="left:518px;top:289px;width:796px;height:12px;background:#ababab"></div>
<div class="r" style="left:518px;top:481px;width:796px;height:12px;background:#cbcbcb"></div>
<svg class="r" style="left:527px;top:260px" width="20" height="20" viewBox="0 0 20 20"><path d="M1.5 0 H18.5 L20 1.5 V18.5 L18.5 20 H1.5 L0 18.5 V1.5 Z" fill="#f3635a"/><path d="M13.9 5.2 A6.2 6.2 0 1 0 14.4 14.6 L12.4 12.1 A3 3 0 1 1 12.0 7.6 Z" fill="#ffffff"/><path d="M14.6 12.2 L12.4 10.1 Q11.6 9.0 12.5 8.2 Q13.4 7.6 14.6 8.7 Q15.8 7.6 16.7 8.2 Q17.6 9.0 16.8 10.1 Z" fill="#ffffff"/></svg>
<div class="t" style="left:551.59px;top:262px;font-size:15.0px;line-height:17px;color:#111;transform:scaleX(1.0113);">Выбор абонемента</div>
<div class="r" style="left:1161px;top:269px;width:12px;height:1px;background:#111"></div>
<div class="r" style="left:1219px;top:264px;width:12px;height:12px;border:1px solid #111;box-sizing:border-box"></div>
<svg class="r" style="left:1278px;top:264px" width="12" height="12"><path d="M0.5 0.5 L11.5 11.5 M11.5 0.5 L0.5 11.5" stroke="#111" stroke-width="1.1"/></svg>
<div class="t" style="left:526.00px;top:311px;font-size:15.0px;line-height:17px;color:#1b1b1b;transform:scaleX(1.0750);">Абонемент:</div>
<div class="t" style="left:526.00px;top:341px;font-size:15.0px;line-height:17px;color:#1b1b1b;transform:scaleX(1.0333);">Дата начала:</div>
<div class="r" style="left:625px;top:307px;width:684px;height:27px;background:#fff;border:1px solid #0a78d4;box-sizing:border-box"></div>
<svg class="r" style="left:1295px;top:318.0px" width="9" height="5"><path d="M0 0 H9 L4.5 5 Z" fill="#707070"/></svg>
<div class="r" style="left:625px;top:334px;width:684px;height:251px;background:#f5f5f5;border:1px solid #c9cadd;border-top:none;box-sizing:border-box;box-shadow:2px 3px 6px rgba(0,0,0,0.18)"></div>
<div class="r" style="left:628px;top:472px;width:658px;height:25px;background:#fff1bd"></div>
<div class="t" style="left:630.50px;top:341px;font-size:15.0px;line-height:17px;color:#222;transform:scaleX(1.0827);">Лечение в номере</div>
<div class="t" style="left:629.43px;top:368px;font-size:15.0px;line-height:17px;color:#222;transform:scaleX(1.0693);">Начинаем отдыхать</div>
<div class="t" style="left:629.41px;top:395px;font-size:15.0px;line-height:17px;color:#222;transform:scaleX(1.0909);">Новая ЛП</div>
<div class="t" style="left:629.42px;top:422px;font-size:15.0px;line-height:17px;color:#222;transform:scaleX(1.0795);">Однодневный абонемент</div>
<div class="t" style="left:629.43px;top:449px;font-size:15.0px;line-height:17px;color:#222;transform:scaleX(1.0674);">Полный улет</div>
<div class="t" style="left:629.44px;top:476px;font-size:15.0px;line-height:17px;color:#222;transform:scaleX(1.0619);">Релакс 7 дней</div>
<div class="t" style="left:629.44px;top:503px;font-size:15.0px;line-height:17px;color:#222;transform:scaleX(1.0608);">Семейный абонемент</div>
<div class="t" style="left:629.48px;top:530px;font-size:15.0px;line-height:17px;color:#222;transform:scaleX(1.0227);">Семья</div>
<div class="t" style="left:630.50px;top:557px;font-size:15.0px;line-height:17px;color:#222;transform:scaleX(1.0409);">Тестовый</div>
<div class="r" style="left:1287px;top:335px;width:21px;height:249px;background:#efefef"></div>
<div class="r" style="left:1287px;top:485px;width:21px;height:78px;background:#c8c8c8"></div>
<svg class="r" style="left:1292px;top:342px" width="11" height="7"><path d="M0.5 6 L5.5 1 L10.5 6" stroke="#9a9a9a" stroke-width="1.3" fill="none"/></svg>
<svg class="r" style="left:1292px;top:570px" width="11" height="7"><path d="M0.5 1 L5.5 6 L10.5 1" stroke="#9a9a9a" stroke-width="1.3" fill="none"/></svg>
</body></html>
